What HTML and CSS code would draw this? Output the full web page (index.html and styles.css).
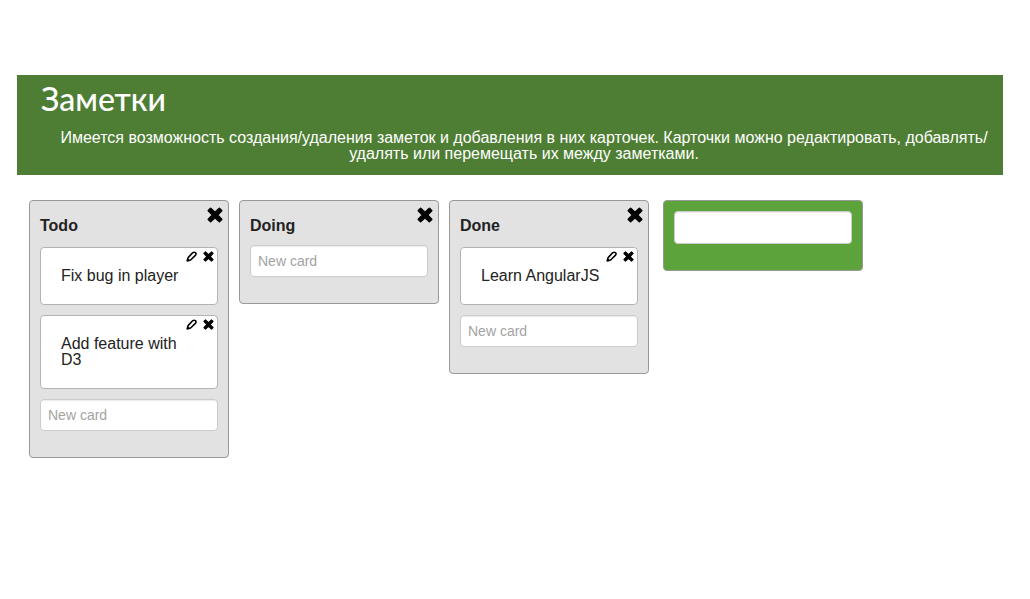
FILE: index.html
```html
<!DOCTYPE html>
<html lang="ru">
<head>
<meta charset="utf-8">
<meta name="viewport" content="width=device-width, initial-scale=1">
<title>Заметки</title>
<link rel="stylesheet" href="styles.css">
</head>
<body>
<svg class="sprite" aria-hidden="true">
  <symbol id="cross" viewBox="0 0 16 16">
    <path d="M3.6 1.3 8 5.4 12.4 1.3 14.7 3.6 10.6 8 14.7 12.4 12.4 14.7 8 10.6 3.6 14.7 1.3 12.4 5.4 8 1.3 3.6Z" stroke="currentColor" stroke-width="1.6" stroke-linejoin="round"/>
  </symbol>
  <symbol id="pencil" viewBox="0 0 12 12">
    <path d="M1.5 10.5 2.3 7.2 7.2 2Q8.6 .8 10.2 1.8T10.2 4.8L5 9.8Z" fill="none" stroke="currentColor" stroke-width="1.7" stroke-linejoin="round"/>
    <path d="M.6 11.4 1.2 7.4 4.8 10.8Z"/>
  </symbol>
</svg>
<header class="banner">
  <h1 class="banner-title">Заметки</h1>
  <p class="banner-text">Имеется возможность создания/удаления заметок и добавления в них карточек. Карточки можно редактировать, добавлять/<wbr>удалять или перемещать их между заметками.</p>
</header>
<main class="board">
  <section class="list">
    <h2 class="list-title">Todo</h2>
    <button class="icon-button list-close" type="button" aria-label="Удалить заметку Todo"><svg class="icon-large"><use href="#cross"/></svg></button>
    <div class="cards">
      <article class="card">
        <div class="card-actions">
          <button class="icon-button" type="button" aria-label="Редактировать"><svg class="icon-small"><use href="#pencil"/></svg></button>
          <button class="icon-button" type="button" aria-label="Удалить"><svg class="icon-small"><use href="#cross"/></svg></button>
        </div>
        <p class="card-text">Fix bug in player</p>
      </article>
      <article class="card">
        <div class="card-actions">
          <button class="icon-button" type="button" aria-label="Редактировать"><svg class="icon-small"><use href="#pencil"/></svg></button>
          <button class="icon-button" type="button" aria-label="Удалить"><svg class="icon-small"><use href="#cross"/></svg></button>
        </div>
        <p class="card-text">Add feature with D3</p>
      </article>
    </div>
    <input class="field" type="text" placeholder="New card" aria-label="New card">
  </section>
  <section class="list">
    <h2 class="list-title">Doing</h2>
    <button class="icon-button list-close" type="button" aria-label="Удалить заметку Doing"><svg class="icon-large"><use href="#cross"/></svg></button>
    <input class="field" type="text" placeholder="New card" aria-label="New card">
  </section>
  <section class="list">
    <h2 class="list-title">Done</h2>
    <button class="icon-button list-close" type="button" aria-label="Удалить заметку Done"><svg class="icon-large"><use href="#cross"/></svg></button>
    <div class="cards">
      <article class="card">
        <div class="card-actions">
          <button class="icon-button" type="button" aria-label="Редактировать"><svg class="icon-small"><use href="#pencil"/></svg></button>
          <button class="icon-button" type="button" aria-label="Удалить"><svg class="icon-small"><use href="#cross"/></svg></button>
        </div>
        <p class="card-text">Learn AngularJS</p>
      </article>
    </div>
    <input class="field" type="text" placeholder="New card" aria-label="New card">
  </section>
  <form class="list list-new">
    <input class="field field-tall" type="text" aria-label="Новая заметка">
  </form>
</main>
</body>
</html>
```
FILE: styles.css
```css
* {
  box-sizing: border-box;
}

body {
  margin: 0;
  padding: 75px 27px 24px 17px;
  background: #fff;
  color: #222;
  font: 16px/16px "Liberation Sans", Arial, sans-serif;
}

.sprite {
  position: absolute;
  width: 0;
  height: 0;
}

.banner {
  padding: 8px 12px 13px 24px;
  background: #4e7e34;
  color: #fff;
}

.banner-title {
  margin: 0;
  font: 500 32px/36px "Comic Sans MS", "Comic Neue", Lato, sans-serif;
}

.banner-text {
  margin: 11px 0 0 16px;
  text-align: center;
}

.board {
  display: flex;
  flex-wrap: wrap;
  align-items: flex-start;
  gap: 10px;
  padding: 25px 12px;
}

.list {
  position: relative;
  width: 200px;
  padding: 17px 10px 26px;
  background: #e2e2e2;
  border: 1px solid #999;
  border-radius: 4px;
}

.list-title {
  margin: 0 0 11px;
  font-size: 16px;
  line-height: 16px;
}

.icon-button {
  display: block;
  padding: 0;
  border: 0;
  background: none;
  color: #000;
  cursor: pointer;
}

.icon-button svg {
  display: block;
  fill: currentColor;
}

.icon-large {
  width: 16px;
  height: 16px;
}

.icon-small {
  width: 11px;
  height: 11px;
}

.list-close {
  position: absolute;
  top: 6px;
  right: 5px;
}

.cards {
  padding-top: 2px;
}

.card {
  position: relative;
  margin-bottom: 10px;
  padding: 20px;
  background: #fff;
  border: 1px solid #b4b4b4;
  border-radius: 4px;
}

.card-actions {
  position: absolute;
  top: 3px;
  right: 3px;
  display: flex;
  gap: 6px;
}

.card-text {
  margin: 0;
}

.field {
  display: block;
  width: 100%;
  height: 32px;
  padding: 0 7px;
  background: #fff;
  border: 1px solid #ccc;
  border-radius: 4px;
  box-shadow: inset 0 1px 1px rgba(0, 0, 0, .08);
  font: 14px/20px "Liberation Sans", Arial, sans-serif;
  color: #333;
}

.field-tall {
  height: 33px;
}

.field::placeholder {
  color: #a3a3a3;
  opacity: 1;
}

.list-new {
  margin-left: 4px;
  padding-top: 10px;
  background: #5ca33b;
}
```
